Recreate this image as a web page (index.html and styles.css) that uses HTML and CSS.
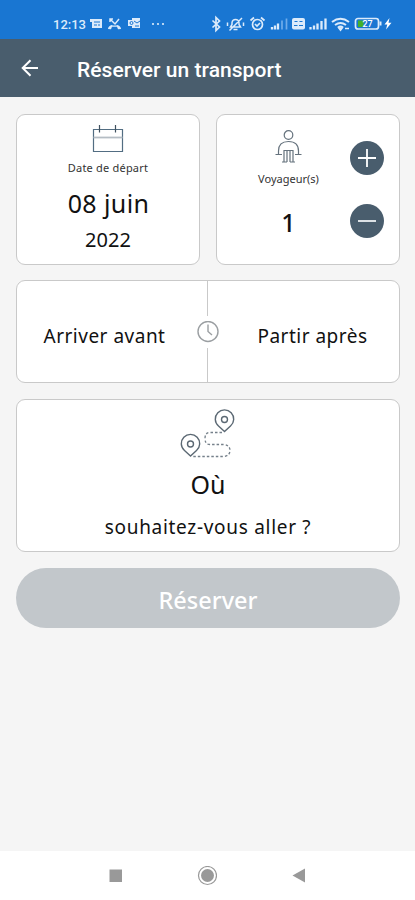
FILE: index.html
```html
<!DOCTYPE html>
<html lang="fr">
<head>
  <meta charset="UTF-8">
  <meta name="viewport" content="width=device-width, initial-scale=1.0">
  <title>Réserver un transport</title>
  <link rel="stylesheet" href="styles.css">
</head>
<body>

  <div class="status-bar">
    <span class="clock">12:13</span>
    <svg class="notif-icons" width="80" height="16" viewBox="0 0 80 16" fill="#dcebfb">
      <path d="M0 3h12v9H2V6H0z"/>
      <path d="M4 6h6M4 9h3M8 9h2" stroke="#1976d2" stroke-width="1"/>
      <path d="M18 13q0-2.500 3.500-4l1.500 .5h3l1.500-.5q3.500 1.500 3.500 4l-3 .3-1-2.500h-5l-1 2.500z"/>
      <path d="M20 3l5 5 4-5M20 6V3h3" fill="none" stroke="#dcebfb" stroke-width="1.5"/>
      <path d="M38 4h4V2h8v10h-8v-2h-4z"/>
      <circle cx="41.500" cy="7" r="1.500" fill="none" stroke="#1976d2"/>
      <path d="M44 5l3 2 3-2M45 10h4" fill="none" stroke="#1976d2"/>
      <circle cx="63" cy="8" r="1.100"/>
      <circle cx="68" cy="8" r="1.100"/>
      <circle cx="73" cy="8" r="1.100"/>
    </svg>
    <svg class="system-icons" width="182" height="18" viewBox="0 0 182 18" fill="none" stroke="#dcebfb" stroke-width="1.7">
      <!-- bluetooth -->
      <path d="M1.500 5.500l7 6.500-3.500 3.500v-13L8.500 6l-7 6.500"/>
      <!-- muted bell -->
      <path d="M19.500 12h10l-1.500-2.500V7.500q-.5-3-3.500-3T21 7.500v2zM22.500 14.500h4M18.500 15.500L31 3M16.500 7.500v3.500M32.500 7.500v3.500" stroke-width="1.500"/>
      <!-- alarm -->
      <circle cx="46.500" cy="9.500" r="5"/>
      <path d="M44 9l2 2 3-3M39.500 5.500l3.500-3M53.500 5.500l-3.500-3"/>
      <!-- signal -->
      <path d="M61 12v2.500M64 10.500v4M67 8.500v6" stroke-width="2.300"/>
      <path d="M71 5.500v9M75.500 3.500v11" stroke="#6facea"/>
      <!-- volte -->
      <rect x="81" y="3" width="13" height="11.500" rx="2" fill="#dcebfb" stroke="none"/>
      <path d="M83.500 6.500h3M88.500 6.500h3M83 10.500h3.500M88 10.500h4" stroke="#1976d2" stroke-width="1.200"/>
      <path d="M99.500 12v2.500M103 10.500v4M106.500 8.500v6M110.500 6v8.500M114.500 3.500v11" stroke-width="2.300"/>
      <!-- wifi -->
      <path d="M121 7q8.500-6.500 17 0M124 10q5.500-4 11 0M127 12.500q2.500-1.800 5 0" stroke-width="2"/>
      <path d="M128 13h3l-1.500 2zM134 13.500h4" fill="#dcebfb"/>
      <!-- battery -->
      <rect x="144.500" y="3.500" width="23" height="10.500" rx="2.500" stroke-width="1.700"/>
      <path d="M147 5.500h5.500v6.500H147z" fill="#43b02a" stroke="none"/>
      <path d="M169.500 6.500v4" stroke-width="2"/>
      <text class="battery-level" x="151.500" y="12">27</text>
      <path d="M178.500 3l-5 6.500h2.800l-1.300 5 5.500-6.800h-3z" fill="#fff" stroke="none"/>
    </svg>
  </div>

  <div class="app-bar">
    <svg width="20" height="20" viewBox="0 0 20 20" fill="none" stroke="#fff" stroke-width="2">
      <path d="M18 10H3M10.500 2.200L2.700 10l7.800 7.800"/>
    </svg>
    <h1 class="title">Réserver un transport</h1>
  </div>

  <div class="content">
    <div class="row">
      <div class="card date-card">
        <svg width="32" height="28" viewBox="0 0 32 28" fill="none" stroke="#526d82" stroke-width="1.200">
          <path d="M1.500 4.500h29v22h-29z"/>
          <path d="M1.500 12.500h29" stroke="#b5bdc4" stroke-width="1.800"/>
          <path d="M7.500 0v7.500M23.500 0v7.500" stroke="#40515f"/>
        </svg>
        <div class="label">Date de départ</div>
        <div class="day">08 juin</div>
        <div class="year">2022</div>
      </div>

      <div class="card travellers-card">
        <div class="travellers">
          <svg width="28" height="34" viewBox="0 0 28 34" fill="none" stroke="#65727d" stroke-width="1.200">
            <circle cx="13.500" cy="5" r="4.300"/>
            <path d="M.5 24.500H7M20 24.500h6.500M3.500 24v-3q0-9.500 10-9.500t10 9.500v3"/>
            <path d="M9 32V20.500h9V32M12 32V20.500M15 32V20.500M7 32h5M15 32h5"/>
          </svg>
          <div class="label">Voyageur(s)</div>
          <div class="count">1</div>
        </div>
        <div class="stepper">
          <button class="round-button" aria-label="Ajouter">
            <svg width="18" height="18" viewBox="0 0 18 18" stroke="#fff" stroke-width="1.800"><path d="M9 0v18M0 9h18"/></svg>
          </button>
          <button class="round-button" aria-label="Retirer">
            <svg width="18" height="18" viewBox="0 0 18 18" stroke="#dce1e5" stroke-width="2"><path d="M0 9h18"/></svg>
          </button>
        </div>
      </div>
    </div>

    <div class="card time-card">
      <div class="time-option arrive">Arriver avant</div>
      <div class="divider">
        <span class="line"></span>
        <svg width="24" height="22" viewBox="0 0 24 22" fill="none" stroke="#9b9fa2" stroke-width="1.400">
          <circle cx="13" cy="10.500" r="10"/>
          <path d="M13 3.500v7l4 3.500"/>
        </svg>
        <span class="line"></span>
      </div>
      <div class="time-option leave">Partir après</div>
    </div>

    <div class="card destination-card">
      <svg width="56" height="50" viewBox="0 0 56 50" fill="none" stroke="#5b6873" stroke-width="1.400">
        <path d="M44.500 22.500l-6-5.500a9.200 9.200 0 1 1 12 0z"/>
        <circle cx="44.500" cy="10.500" r="3"/>
        <path d="M10.500 47l-6-5.500a9.200 9.200 0 1 1 12 0z"/>
        <circle cx="10.500" cy="35" r="3"/>
        <path d="M42 23.500H30q-5 0-5 6t5 6h14q6 1 6 6t-6 6H13" stroke="#75808a" stroke-width="1.300" stroke-dasharray="2.500 2"/>
      </svg>
      <div class="where">Où</div>
      <div class="question">souhaitez-vous aller ?</div>
    </div>

    <button class="book-button" disabled>Réserver</button>
  </div>

  <div class="nav-bar">
    <svg width="14" height="14" viewBox="0 0 14 14" fill="#999"><path d="M1.500 .5H14V13H1.500z"/></svg>
    <svg width="20" height="20" viewBox="0 0 20 20">
      <circle cx="10.500" cy="9.500" r="9" fill="none" stroke="#999" stroke-width="1.200"/>
      <circle cx="10.500" cy="9.500" r="6.500" fill="#999"/>
    </svg>
    <svg width="14" height="16" viewBox="0 0 14 16" fill="#999"><path d="M.5 7.500l12.500-7v14z"/></svg>
  </div>

</body>
</html>
```
FILE: styles.css
```css
* {
  box-sizing: border-box;
}

body {
  margin: 0;
  height: 900px;
  display: flex;
  flex-direction: column;
  background-color: #f5f5f5;
  color: #111;
  font-family: "Noto Sans", sans-serif;
  overflow: hidden;
}

svg {
  display: block;
  flex-shrink: 0;
}

button {
  border: none;
  padding: 0;
  font-family: inherit;
}

.status-bar {
  height: 39px;
  padding: 9px 0 0 53px;
  display: flex;
  align-items: center;
  background-color: #1976d2;
  color: #dcebfb;
}

.clock {
  width: 37px;
  font-family: Roboto, sans-serif;
  font-size: 13px;
  font-weight: 500;
}

.system-icons {
  margin-left: 41px;
}

.battery-level {
  font-family: Roboto, sans-serif;
  font-size: 9px;
  font-weight: 500;
  fill: #fff;
  stroke: none;
}

.app-bar {
  height: 58px;
  padding: 0 20px;
  display: flex;
  align-items: center;
  background-color: #495d6d;
  color: #fff;
}

.title {
  margin: 3px 0 0 37px;
  font-family: Roboto, sans-serif;
  font-size: 21px;
  font-weight: 500;
  letter-spacing: 0.05px;
  white-space: nowrap;
}

.content {
  flex: 1;
  padding: 17px 15px 0 16px;
  display: flex;
  flex-direction: column;
  gap: 15px;
}

.row {
  display: grid;
  grid-template-columns: 1fr 1fr;
  gap: 16px;
}

.card {
  background-color: #fff;
  border: 1px solid #c9c9c9;
  border-radius: 9px;
}

.date-card,
.travellers-card {
  height: 151px;
}

.date-card {
  padding-top: 10px;
  display: flex;
  flex-direction: column;
  align-items: center;
}

.label {
  font-size: 11px;
  line-height: 16px;
  color: #333;
  white-space: nowrap;
}

.date-card .label {
  margin-top: 7px;
  letter-spacing: 0.2px;
}

.day {
  margin-top: 11px;
  padding-left: 1px;
  font-size: 25px;
  line-height: 32px;
  letter-spacing: 0.4px;
}

.year {
  margin-top: 7px;
  font-size: 20px;
  line-height: 28px;
}

.travellers-card {
  padding-right: 15px;
  display: flex;
}

.travellers {
  flex: 1;
  padding: 15px 0 0 10px;
  display: flex;
  flex-direction: column;
  align-items: center;
}

.travellers .label {
  margin-top: 7px;
}

.count {
  margin-top: 19px;
  font-size: 25px;
  line-height: 32px;
  font-weight: 500;
}

.stepper {
  padding-top: 26px;
  display: flex;
  flex-direction: column;
  gap: 29px;
}

.round-button {
  width: 34px;
  height: 34px;
  display: flex;
  align-items: center;
  justify-content: center;
  border-radius: 50%;
  background-color: #495d6d;
}

.time-card {
  height: 103px;
  display: grid;
  grid-template-columns: 178px 24px 1fr;
}

.time-option {
  padding-top: 8px;
  align-self: center;
  text-align: center;
  font-size: 19px;
  line-height: 26px;
  letter-spacing: 0.5px;
  white-space: nowrap;
}

.arrive {
  padding-right: 3px;
}

.leave {
  padding-left: 7px;
}

.divider {
  display: flex;
  flex-direction: column;
  align-items: center;
  gap: 5px;
}

.line {
  flex: 1;
  width: 1px;
  background-color: #c9c9c9;
}

.destination-card {
  height: 153px;
  margin-top: 1px;
  padding-top: 9px;
  display: flex;
  flex-direction: column;
  align-items: center;
}

.where {
  margin-top: 8px;
  font-size: 25px;
  line-height: 34px;
}

.question {
  margin-top: 13px;
  font-size: 19px;
  line-height: 26px;
  letter-spacing: 0.7px;
}

.book-button {
  height: 60px;
  margin-top: 1px;
  padding-top: 3px;
  border-radius: 30px;
  background-color: #c2c7cb;
  color: #fff;
  font-size: 23.500px;
  font-weight: 500;
}

.nav-bar {
  height: 49px;
  padding: 0 109px 0 108px;
  display: flex;
  align-items: center;
  justify-content: space-between;
  background-color: #fff;
}
```
